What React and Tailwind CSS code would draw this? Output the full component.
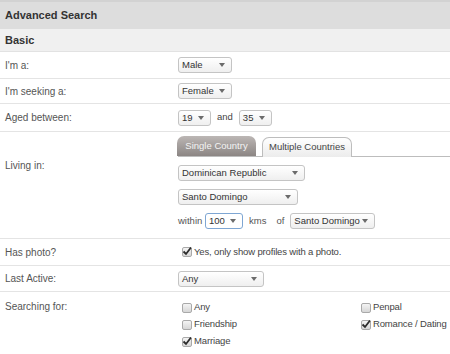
import React from "react";

function Arrow() {
  return (
    <svg width="6" height="4" viewBox="0 0 6 4" className="shrink-0">
      <path d="M0 0 L6 0 L3 4 Z" fill="#6b6b6b" />
    </svg>
  );
}

function Select({ value, w, focus = false }) {
  return (
    <div
      className={
        "flex h-[16px] shrink-0 items-center justify-between whitespace-nowrap rounded-[3px] border pl-[3px] pr-[6px] text-[9.5px] leading-none text-[#333] " +
        (focus
          ? "border-[#7ea6d3] bg-white"
          : "border-[#c4c4c4] bg-gradient-to-b from-white to-[#efefef]")
      }
      style={{ width: w }}
    >
      <span>{value}</span>
      <Arrow />
    </div>
  );
}

function Check({ checked }) {
  return (
    <div className="relative h-[10px] w-[10px] shrink-0 rounded-[2px] border border-[#a9a9a9] bg-gradient-to-b from-[#f4f4f4] to-[#d6d6d6]">
      {checked && (
        <svg width="10" height="10" viewBox="0 0 10 10" className="absolute -left-[1px] -top-[2px]">
          <path d="M1.5 5.5 L4 8 L9 1.5" stroke="#2b2b2b" strokeWidth="1.8" fill="none" />
        </svg>
      )}
    </div>
  );
}

function CheckItem({ checked, label }) {
  return (
    <div className="flex h-[17px] items-center gap-[2px] whitespace-nowrap pl-[4px] text-[9.5px] tracking-[-0.15px] text-[#444]">
      <Check checked={checked} />
      <span>{label}</span>
    </div>
  );
}

function Row({ label, children, labelClass = "items-center", rowClass = "" }) {
  return (
    <div className={"flex border-t border-[#e4e4e4] " + rowClass}>
      <div className={"flex w-[178px] shrink-0 pl-[5px] text-[10px] text-[#555] " + labelClass}>
        {label}
      </div>
      <div className="flex-1">{children}</div>
    </div>
  );
}

export default function App() {
  return (
    <div className="h-[354px] w-[450px] overflow-hidden bg-white font-['Liberation_Sans',Arial,sans-serif]">
      {/* header */}
      <div className="flex h-[29px] items-center border-t-2 border-[#d2d2d2] bg-[#dddddd] pl-[5px] text-[11px] font-bold text-[#333]">
        Advanced Search
      </div>
      <div className="flex h-[23px] items-center border-b border-[#e2e2e2] bg-[#f0f0f0] pl-[5px] text-[11px] font-bold text-[#333]">
        Basic
      </div>

      <Row label="I'm a:" rowClass="h-[26px] border-t-0">
        <div className="flex h-full items-center">
          <Select value="Male" w={54} />
        </div>
      </Row>
      <Row label="I'm seeking a:" rowClass="h-[25px]">
        <div className="flex h-full items-center">
          <Select value="Female" w={54} />
        </div>
      </Row>
      <Row label="Aged between:" rowClass="h-[28px]">
        <div className="flex h-full items-center text-[9.5px] text-[#444]">
          <Select value="19" w={33} />
          <span className="ml-[6px] mr-[6px]">and</span>
          <Select value="35" w={33} />
        </div>
      </Row>

      {/* living in */}
      <Row label="Living in:" labelClass="items-start pt-[26px]" rowClass="h-[107px]">
        <div className="flex flex-col pt-[5px]">
          <div className="flex h-[20px] items-end border-b border-[#bdbdbd]">
            <div className="ml-[-1px] flex h-[20px] w-[79px] items-center justify-center rounded-t-[7px] bg-gradient-to-b from-[#bcb7b5] to-[#8c8684] text-[9.5px] text-[#f4f4f4]">
              Single Country
            </div>
            <div className="mb-[-1px] ml-[6px] flex h-[20px] w-[90px] items-center justify-center whitespace-nowrap rounded-t-[7px] border border-b-0 border-[#bdbdbd] bg-gradient-to-b from-white to-[#ececec] text-[9.5px] text-[#444]">
              Multiple Countries
            </div>
          </div>
          <div className="mt-[8px]">
            <Select value="Dominican Republic" w={127} />
          </div>
          <div className="mt-[8px]">
            <Select value="Santo Domingo" w={120} />
          </div>
          <div className="mt-[8px] flex items-center whitespace-nowrap text-[9.5px] text-[#555]">
            <span className="w-[27px]">within</span>
            <Select value="100" w={38} focus />
            <span className="ml-[6px]">kms</span>
            <span className="ml-[10px] mr-[6px]">of</span>
            <Select value="Santo Domingo" w={85} />
          </div>
        </div>
      </Row>

      <Row label="Has photo?" rowClass="h-[27px]">
        <div className="flex h-full items-center">
          <CheckItem checked label="Yes, only show profiles with a photo." />
        </div>
      </Row>
      <Row label="Last Active:" rowClass="h-[26px]">
        <div className="flex h-full items-center">
          <Select value="Any" w={86} />
        </div>
      </Row>
      <Row label="Searching for:" labelClass="items-start pt-[7px]" rowClass="h-[70px]">
        <div className="grid grid-cols-[179px_1fr] pt-[7px]">
          <CheckItem label="Any" />
          <CheckItem label="Penpal" />
          <CheckItem label="Friendship" />
          <CheckItem checked label="Romance / Dating" />
          <CheckItem checked label="Marriage" />
        </div>
      </Row>
    </div>
  );
}
